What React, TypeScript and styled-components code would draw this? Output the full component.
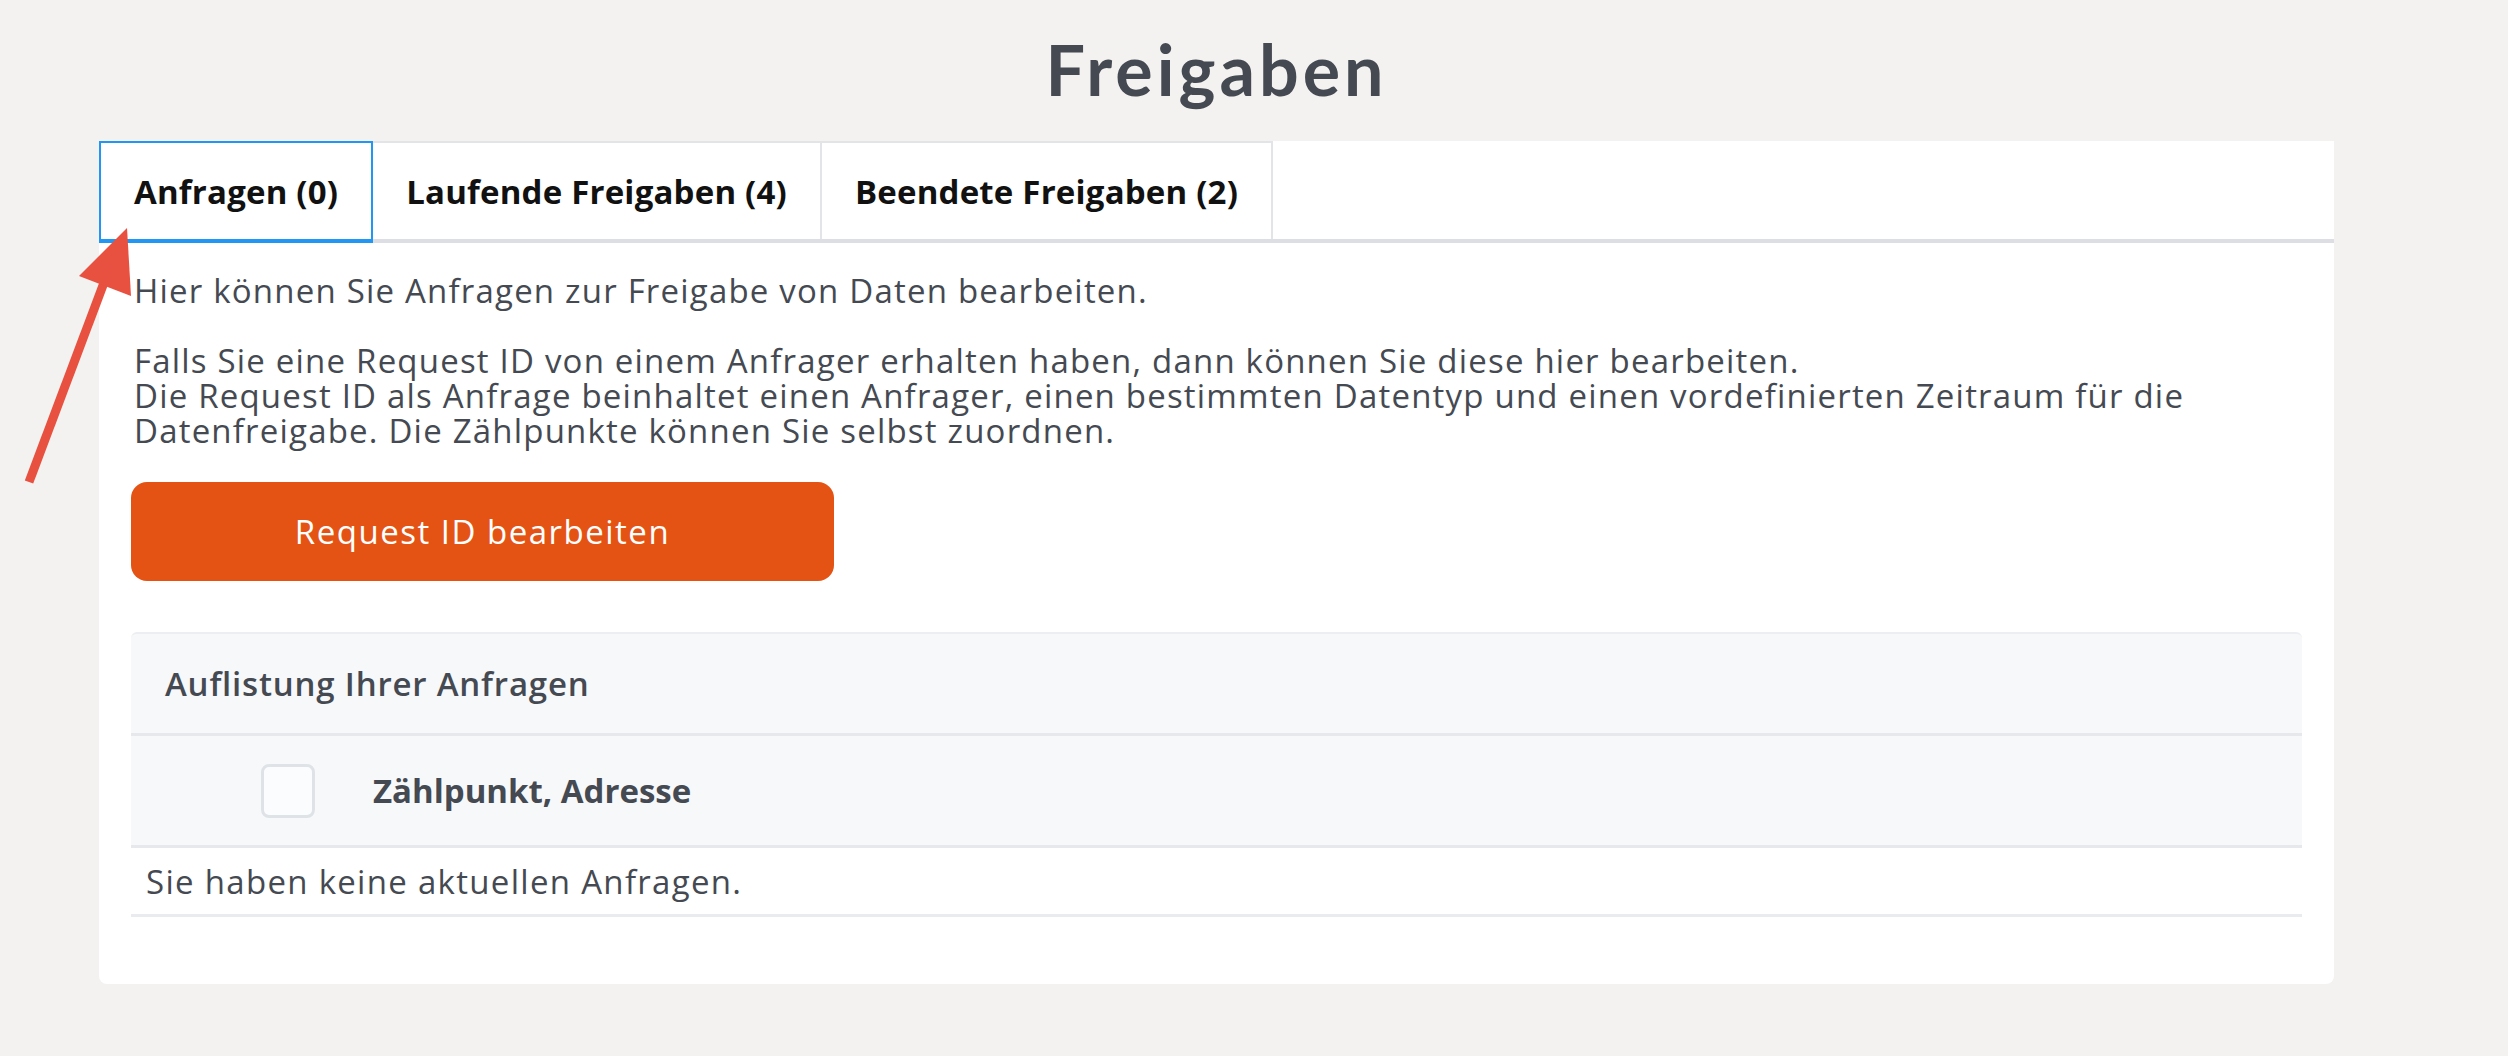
import React from 'react';
import styled, { createGlobalStyle } from 'styled-components';

const GlobalStyle = createGlobalStyle`
  html, body {
    margin: 0;
    padding: 0;
    background-color: #f3f2f0;
  }
  body {
    font-family: 'Open Sans', 'Noto Sans', sans-serif;
    color: #454a52;
  }
  * {
    box-sizing: border-box;
  }
`;

const Page = styled.div`
  position: relative;
  min-height: 1056px;
  padding: 0 174px 0 99px;
`;

const Title = styled.h1`
  margin: 0;
  height: 141px;
  display: flex;
  align-items: center;
  justify-content: center;
  padding-bottom: 4px;
  font-family: 'Lato', sans-serif;
  font-size: 70px;
  font-weight: 700;
  letter-spacing: 4px;
  color: #454a52;
`;

const Card = styled.div`
  background-color: #fff;
  border-radius: 0 0 8px 8px;
  padding: 0 32px 67px;
`;

const TabBar = styled.div`
  display: flex;
  margin: 0 -32px;
  border-bottom: 4px solid #dcdee3;
`;

const Tab = styled.button<{ isActive?: boolean }>`
  margin-bottom: ${(p) => (p.isActive ? '-4px' : '0')};
  height: ${(p) => (p.isActive ? '102px' : '98px')};
  padding: 0 33px;
  background-color: #fff;
  border: 2px solid ${(p) => (p.isActive ? '#2196f3' : '#e2e4e7')};
  border-bottom: ${(p) => (p.isActive ? '4px solid #2196f3' : 'none')};
  border-left-width: ${(p) => (p.isActive ? '2px' : '0')};
  font-family: 'Open Sans', sans-serif;
  font-size: 33px;
  font-weight: 700;
  letter-spacing: 0.2px;
  color: #111;
  cursor: pointer;
`;

const Text = styled.p`
  margin: 0;
  padding-left: 3px;
  font-size: 33px;
  line-height: 35px;
  letter-spacing: 1.2px;
`;

const Intro = styled(Text)`
  margin-top: 30px;
`;

const Details = styled(Text)`
  margin-top: 35px;
`;

const OrangeButton = styled.button`
  display: block;
  margin-top: 34px;
  width: 703px;
  height: 99px;
  border: none;
  border-radius: 16px;
  background-color: #e55314;
  color: #fff;
  font-family: 'Open Sans', sans-serif;
  font-size: 33px;
  font-weight: 500;
  letter-spacing: 1.5px;
  cursor: pointer;
`;

const Panel = styled.div`
  margin-top: 51px;
`;

const PanelHeader = styled.div`
  display: flex;
  align-items: center;
  height: 101px;
  padding-left: 34px;
  background-color: #f7f8fa;
  border-top: 2px solid #eceef1;
  border-radius: 6px 6px 0 0;
  font-size: 33px;
  font-weight: 600;
  letter-spacing: 0.8px;
`;

const HeadRow = styled.div`
  display: flex;
  align-items: center;
  gap: 58px;
  height: 115px;
  padding-left: 130px;
  background-color: #f7f8fa;
  border-top: 3px solid #e6e8eb;
  border-bottom: 3px solid #e6e8eb;
`;

const CheckBox = styled.span`
  width: 54px;
  height: 54px;
  border: 3px solid #dfe3e7;
  border-radius: 8px;
  background-color: #fbfcfd;
`;

const HeadLabel = styled.span`
  font-size: 33px;
  font-weight: 700;
`;

const EmptyRow = styled.div`
  display: flex;
  align-items: center;
  height: 69px;
  padding-left: 15px;
  border-bottom: 3px solid #e9ebee;
  font-size: 33px;
  letter-spacing: 1.3px;
`;

const Arrow = styled.svg`
  position: absolute;
  left: 0;
  top: 0;
  pointer-events: none;
`;

const tabs = [
  { key: 'requests', label: 'Anfragen (0)' },
  { key: 'running', label: 'Laufende Freigaben (4)' },
  { key: 'finished', label: 'Beendete Freigaben (2)' },
];

export default function App() {
  const [active, setActive] = React.useState('requests');

  return (
    <>
      <GlobalStyle />
      <Page>
        <Title>Freigaben</Title>
        <Card>
          <TabBar>
            {tabs.map((t) => (
              <Tab key={t.key} isActive={active === t.key} onClick={() => setActive(t.key)}>
                {t.label}
              </Tab>
            ))}
          </TabBar>
          <Intro>Hier können Sie Anfragen zur Freigabe von Daten bearbeiten.</Intro>
          <Details>
            Falls Sie eine Request ID von einem Anfrager erhalten haben, dann können Sie diese hier bearbeiten.
            <br />
            Die Request ID als Anfrage beinhaltet einen Anfrager, einen bestimmten Datentyp und einen vordefinierten Zeitraum für die
            <br />
            Datenfreigabe. Die Zählpunkte können Sie selbst zuordnen.
          </Details>
          <OrangeButton>Request ID bearbeiten</OrangeButton>
          <Panel>
            <PanelHeader>Auflistung Ihrer Anfragen</PanelHeader>
            <HeadRow>
              <CheckBox />
              <HeadLabel>Zählpunkt, Adresse</HeadLabel>
            </HeadRow>
            <EmptyRow>Sie haben keine aktuellen Anfragen.</EmptyRow>
          </Panel>
        </Card>
        {/* annotation arrow */}
        <Arrow width="160" height="500" viewBox="0 0 160 500">
          <line x1="29" y1="482" x2="105" y2="280" stroke="#e8503f" strokeWidth="9" />
          <polygon points="127,228 79,276 131,296" fill="#e8503f" />
        </Arrow>
      </Page>
    </>
  );
}
